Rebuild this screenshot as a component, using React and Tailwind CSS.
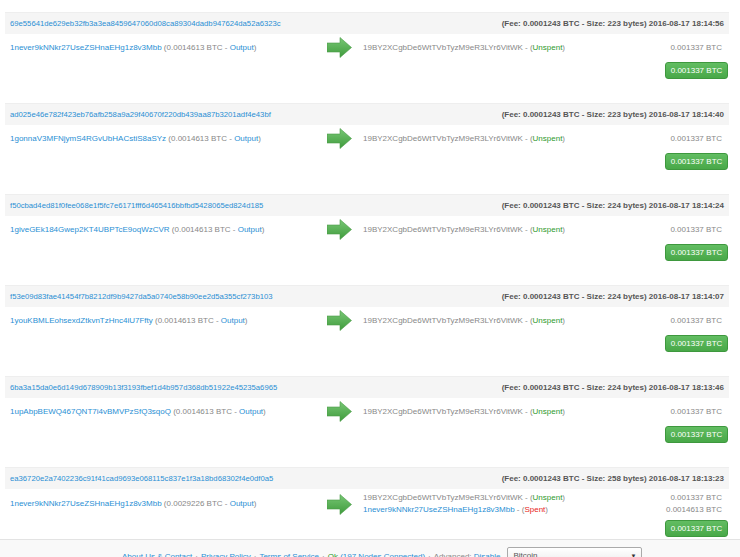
import React from "react";

const txs = [
  {
    hash: "69e55641de629eb32fb3a3ea8459647060d08ca89304dadb947624da52a6323c",
    meta: "(Fee: 0.0001243 BTC - Size: 223 bytes) 2016-08-17 18:14:56",
    input: "1never9kNNkr27UseZSHnaEHg1z8v3Mbb",
    inAmount: "0.0014613",
    outs: [{ addr: "19BY2XCgbDe6WtTVbTyzM9eR3LYr6VitWK", spent: false, amount: "0.001337 BTC", link: false }],
  },
  {
    hash: "ad025e46e782f423eb76afb258a9a29f40670f220db439aa87b3201adf4e43bf",
    meta: "(Fee: 0.0001243 BTC - Size: 223 bytes) 2016-08-17 18:14:40",
    input: "1gonnaV3MFNjymS4RGvUbHACstiS8aSYz",
    inAmount: "0.0014613",
    outs: [{ addr: "19BY2XCgbDe6WtTVbTyzM9eR3LYr6VitWK", spent: false, amount: "0.001337 BTC", link: false }],
  },
  {
    hash: "f50cbad4ed81f0fee068e1f5fc7e6171fff6d465416bbfbd5428065ed824d185",
    meta: "(Fee: 0.0001243 BTC - Size: 224 bytes) 2016-08-17 18:14:24",
    input: "1giveGEk184Gwep2KT4UBPTcE9oqWzCVR",
    inAmount: "0.0014613",
    outs: [{ addr: "19BY2XCgbDe6WtTVbTyzM9eR3LYr6VitWK", spent: false, amount: "0.001337 BTC", link: false }],
  },
  {
    hash: "f53e09d83fae41454f7b8212df9b9427da5a0740e58b90ee2d5a355cf273b103",
    meta: "(Fee: 0.0001243 BTC - Size: 224 bytes) 2016-08-17 18:14:07",
    input: "1youKBMLEohsexdZtkvnTzHnc4iU7Ffty",
    inAmount: "0.0014613",
    outs: [{ addr: "19BY2XCgbDe6WtTVbTyzM9eR3LYr6VitWK", spent: false, amount: "0.001337 BTC", link: false }],
  },
  {
    hash: "6ba3a15da0e6d149d678909b13f3193fbef1d4b957d368db51922e45235a6965",
    meta: "(Fee: 0.0001243 BTC - Size: 224 bytes) 2016-08-17 18:13:46",
    input: "1upAbpBEWQ467QNT7i4vBMVPzSfQ3sqoQ",
    inAmount: "0.0014613",
    outs: [{ addr: "19BY2XCgbDe6WtTVbTyzM9eR3LYr6VitWK", spent: false, amount: "0.001337 BTC", link: false }],
  },
  {
    hash: "ea36720e2a7402236c91f41cad9693e068115c837e1f3a18bd68302f4e0df0a5",
    meta: "(Fee: 0.0001243 BTC - Size: 258 bytes) 2016-08-17 18:13:23",
    input: "1never9kNNkr27UseZSHnaEHg1z8v3Mbb",
    inAmount: "0.0029226",
    outs: [
      { addr: "19BY2XCgbDe6WtTVbTyzM9eR3LYr6VitWK", spent: false, amount: "0.001337 BTC", link: false },
      { addr: "1never9kNNkr27UseZSHnaEHg1z8v3Mbb", spent: true, amount: "0.0014613 BTC", link: true },
    ],
  },
];

function Arrow() {
  return (
    <svg width="25" height="21" viewBox="0 0 25 21">
      <defs>
        <linearGradient id="ag" x1="0" y1="0" x2="0" y2="1">
          <stop offset="0" stopColor="#78c775" />
          <stop offset="1" stopColor="#3f9b3c" />
        </linearGradient>
      </defs>
      <path d="M0 6 H13 V0.5 L24.5 10.5 L13 20.5 V15 H0 Z" fill="url(#ag)" stroke="#4a9a47" strokeWidth="0.6" />
    </svg>
  );
}

export default function App() {
  return (
    <div className="min-h-screen bg-white text-[8px] leading-[12px] text-[#888]" style={{ fontFamily: "'Liberation Sans', Arial, sans-serif" }}>
      <div className="ml-[5px] w-[724px] pt-[12px]">
        {txs.map((tx) => (
          <div key={tx.hash} className="mb-[24px]">
            {/* header */}
            <div className="flex h-[22px] items-center justify-between bg-[#f5f5f5] border-t border-[#eeeeee] px-[5px]">
              <span className="text-[7.7px] text-[#2a8fd4]">{tx.hash}</span>
              <span className="font-bold text-[#555]">{tx.meta}</span>
            </div>
            {/* body */}
            <div className="flex items-center py-[3px] pl-[5px] pr-[7px]">
              <div className="w-[310px] whitespace-nowrap">
                <span className="text-[#2a8fd4]">{tx.input}</span> ({tx.inAmount} BTC - <span className="text-[#2a8fd4]">Output</span>)
              </div>
              <div className="w-[43px] pl-[7px]">
                <Arrow />
              </div>
              <div className="flex-1">
                {tx.outs.map((o, i) => (
                  <div key={i} className="flex justify-between whitespace-nowrap">
                    <span>
                      <span className={o.link ? "text-[#2a8fd4]" : ""}>{o.addr}</span> - (
                      <span className={o.spent ? "text-[#e8261d]" : "text-[#2d9a2d]"}>{o.spent ? "Spent" : "Unspent"}</span>)
                    </span>
                    <span>{o.amount}</span>
                  </div>
                ))}
              </div>
            </div>
            <div className="flex justify-end pr-[1px] mt-[1px]">
              <button className="h-[17px] w-[63px] rounded-[3px] border border-[#3e983e] bg-gradient-to-b from-[#62bd62] to-[#48a848] text-white text-[8px]">
                0.001337 BTC
              </button>
            </div>
          </div>
        ))}
      </div>

      {/* footer */}
      <div className="fixed left-0 right-0 top-[539px] h-[40px] border-t border-[#e3e3e3] bg-[#f9f9f9]">
        <div className="flex items-center gap-[3px] pl-[122px] pt-[7px] whitespace-nowrap">
          <span className="text-[#2a8fd4]">About Us &amp; Contact</span>
          <span>·</span>
          <span className="text-[#2a8fd4]">Privacy Policy</span>
          <span>·</span>
          <span className="text-[#2a8fd4]">Terms of Service</span>
          <span>·</span>
          <span>
            <span className="text-[#2d9a2d]">Ok</span> <span className="text-[#2a8fd4]">(197 Nodes Connected)</span>
          </span>
          <span>·</span>
          <span>
            Advanced: <span className="text-[#2a8fd4]">Disable</span>
          </span>
          <div className="ml-[4px] flex h-[20px] w-[135px] items-start justify-between rounded-[2px] border border-[#aaa] bg-gradient-to-b from-white to-[#e8e8e8] px-[5px] pt-[2px] text-[#555]">
            <span>Bitcoin</span>
            <span className="text-[6px] text-[#333]">▼</span>
          </div>
        </div>
      </div>
    </div>
  );
}
